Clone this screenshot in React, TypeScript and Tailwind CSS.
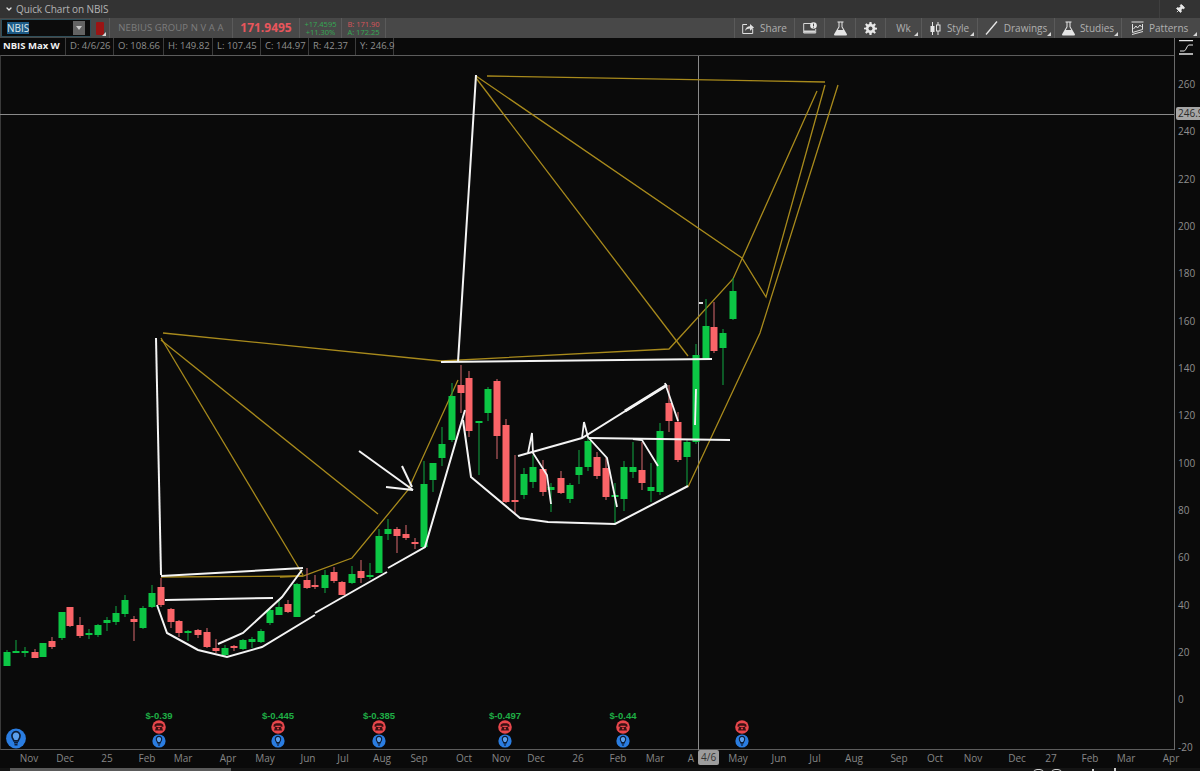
import React from "react";
import { ChevronDown, Pin } from "lucide-react";

type C = [number, number, number, number, number, "g" | "r"];
const candles: C[] = [
  [7, 652, 666, 650, 666, "g"], [16, 651, 652, 640, 653, "g"], [25, 651, 652, 647, 657, "g"], [35, 652, 658, 649, 658, "r"],
  [43, 643, 657, 643, 657, "g"], [52, 641, 647, 637, 649, "r"], [62, 612, 638, 612, 640, "g"], [70, 607, 626, 607, 627, "r"],
  [80, 625, 636, 617, 638, "r"], [89, 633, 635, 629, 639, "g"], [98, 625, 635, 624, 637, "g"], [107, 620, 623, 617, 631, "g"],
  [116, 613, 622, 606, 625, "g"], [125, 600, 614, 595, 617, "g"], [134, 619, 622, 616, 641, "r"], [143, 608, 628, 606, 629, "g"],
  [152, 593, 607, 585, 608, "g"], [161, 587, 605, 578, 607, "r"], [171, 609, 622, 608, 628, "r"], [179, 621, 633, 620, 637, "r"],
  [188, 631, 633, 630, 641, "g"], [198, 630, 635, 629, 638, "r"], [207, 632, 647, 628, 648, "r"], [216, 648, 651, 639, 653, "r"],
  [225, 648, 655, 645, 657, "g"], [234, 646, 648, 645, 651, "r"], [243, 640, 649, 639, 650, "g"], [252, 639, 642, 637, 648, "g"],
  [261, 631, 642, 629, 643, "g"], [270, 610, 623, 609, 625, "g"], [279, 607, 615, 600, 615, "g"], [288, 604, 612, 600, 613, "r"],
  [297, 584, 617, 583, 617, "g"], [307, 580, 588, 568, 589, "r"], [315, 585, 587, 575, 589, "r"], [325, 575, 588, 570, 593, "g"],
  [334, 572, 581, 567, 583, "r"], [342, 582, 595, 581, 595, "r"], [352, 574, 583, 566, 584, "g"], [361, 571, 578, 560, 583, "r"],
  [370, 575, 577, 563, 579, "g"], [379, 536, 573, 529, 573, "g"], [388, 529, 534, 519, 540, "g"], [397, 529, 536, 527, 553, "r"],
  [406, 534, 538, 525, 540, "r"], [415, 542, 544, 538, 549, "r"], [424, 484, 547, 461, 547, "g"], [433, 463, 480, 463, 492, "g"],
  [442, 444, 458, 427, 466, "g"], [452, 396, 440, 383, 442, "g"], [461, 385, 393, 365, 413, "r"], [469, 378, 431, 371, 437, "r"],
  [479, 421, 422, 421, 475, "g"], [488, 389, 413, 387, 421, "g"], [497, 381, 436, 379, 459, "r"], [506, 425, 502, 419, 503, "r"],
  [515, 500, 502, 455, 513, "r"], [524, 474, 495, 468, 499, "g"], [533, 467, 482, 455, 488, "g"], [543, 469, 492, 460, 496, "r"],
  [551, 487, 490, 483, 512, "g"], [561, 478, 493, 471, 494, "r"], [570, 485, 499, 483, 503, "g"], [579, 467, 475, 450, 484, "g"],
  [588, 441, 467, 438, 471, "g"], [597, 457, 476, 452, 479, "r"], [606, 468, 497, 458, 500, "r"], [615, 495, 496, 483, 523, "g"],
  [624, 467, 499, 461, 511, "g"], [633, 467, 472, 442, 478, "g"], [642, 470, 483, 442, 490, "r"], [651, 487, 491, 463, 502, "g"],
  [660, 431, 492, 423, 495, "g"], [669, 403, 421, 385, 432, "r"], [678, 422, 460, 412, 462, "r"], [687, 442, 457, 440, 487, "g"],
  [696, 355, 442, 344, 444, "g"], [706, 326, 359, 299, 360, "g"], [714, 327, 351, 302, 353, "r"], [723, 333, 348, 329, 385, "g"],
  [733, 291, 319, 278, 320, "g"],
];

const white: [string, number][] = [
  ["156,338 161,575", 2], ["161,576 303,568", 2], ["165,600 273,598", 2],
  ["157,605 167,633 198,650 227,657 262,647 315,615", 2], ["315,613 387,572", 2], ["388,568 425,547 465,410", 2],
  ["218,644 243,633 282,597 302,570", 2],
  ["359,451 413,490", 2], ["402,466 412,487", 2], ["386,487 413,490", 2],
  ["458,362 476,75", 2], ["441,362 712,359", 2],
  ["463,420 471,477 520,518 548,522 615,524 688,486", 2],
  ["518,456 582,438 667,385", 2], ["625,411 667,385", 3], ["528,453 532,433 533,453 547,475 551,504", 1.8],
  ["582,438 584,422 588,437 607,458 617,507", 1.8], ["589,438 730,440", 1.8],
  ["633,439 642,440 658,466", 1.8], ["665,383 678,421", 1.8], ["696,389 695,425", 1.8], ["699,303 703,303", 1.8],
];

const gold = [
  "163,333 441,361 669,349 733,279 817,91", "161,338 303,575", "161,340 378,514",
  "161,577 303,576", "280,577 303,576 352,558 408,490 458,380", "476,78 688,356",
  "476,76 742,258 766,297 825,85", "487,76 825,82", "688,487 760,333 838,85",
];

const events: [number, string][] = [
  [159, "$-0.39"], [278, "$-0.445"], [379, "$-0.385"], [505, "$-0.497"], [623, "$-0.44"], [742, ""],
];

const xLabels: [number, string][] = [
  [29, "Nov"], [65, "Dec"], [107, "25"], [147, "Feb"], [183, "Mar"], [228, "Apr"], [265, "May"], [308, "Jun"], [343, "Jul"], [382, "Aug"],
  [419, "Sep"], [464, "Oct"], [501, "Nov"], [536, "Dec"], [578, "26"], [618, "Feb"], [655, "Mar"], [691, "A"], [738, "May"], [779, "Jun"],
  [815, "Jul"], [854, "Aug"], [899, "Sep"], [935, "Oct"], [973, "Nov"], [1017, "Dec"], [1051, "27"], [1090, "Feb"], [1126, "Mar"], [1171, "Apr"],
];

const yLabels = ["260", "240", "220", "200", "180", "160", "140", "120", "100", "80", "60", "40", "20", "0", "-20"];

const Sep = ({ w, className = "", children }: { w: string; className?: string; children?: React.ReactNode }) => (
  <div className={`relative flex h-full shrink-0 items-center justify-center border-r border-[#5a5a5a] ${w} ${className}`}>{children}</div>
);

const Corner = () => (
  <span className="absolute bottom-[2px] right-[3px] h-0 w-0 border-b-[4px] border-l-[4px] border-b-[#d8d8d8] border-l-transparent" />
);

const Flask = () => (
  <svg width="13" height="15" viewBox="0 0 13 15" fill="#e6e6e6">
    <path d="M3.5 0.5h6v1h-1v4.2L12.8 13c.4.8 0 1.6-1 1.6H1.2c-1 0-1.4-.8-1-1.6L4.5 5.7V1.5h-1z" />
    <path d="M5.5 1.5v4.5L3.8 9h5.4L7.5 6V1.5z" fill="#4a4a4a" />
  </svg>
);

const Cell = ({ w, children, bold }: { w: string; children: React.ReactNode; bold?: boolean }) => (
  <div className={`flex h-full shrink-0 items-center border-r border-[#3c3c3c] whitespace-nowrap ${w} ${bold ? "pl-[3px] text-[9.5px] font-bold text-[#f0f0f0]" : "pl-[4px] text-[9.5px] text-[#8f8f8f]"}`}>{children}</div>
);

const Phone = ({ x }: { x: number }) => (
  <g transform={`translate(${x} 727)`}>
    <circle r="6.8" fill="#e8474c" />
    <path d="M-4.5 -1.2c0-2 2-2.6 4.5-2.6s4.5.6 4.5 2.6v1h-2v-1h-5v1h-2z" fill="#3a1012" />
    <path d="M-3 0h6l1 3.4h-8z" fill="#3a1012" />
    <circle cy="1.6" r="1" fill="#e8474c" />
  </g>
);

const Bulb = ({ x, y, s = 1 }: { x: number; y: number; s?: number }) => (
  <g transform={`translate(${x} ${y}) scale(${s})`}>
    <circle r="6.6" fill="#2a7de1" />
    <path d="M-2.6 -1.2a2.7 2.7 0 1 1 5.2 0c0 1.2-1 1.6-1.2 2.8h-2.8c-.2-1.2-1.2-1.6-1.2-2.8z" fill="#5b9fec" stroke="#0d1d36" strokeWidth="1.1" />
    <path d="M-1.3 2.8h2.6M-1 4.1h2" stroke="#0d1d36" strokeWidth="1" />
  </g>
);

export default function App() {
  return (
    <div className="flex h-[771px] w-[1200px] flex-col overflow-hidden bg-[#0a0a0a] font-['Open_Sans',sans-serif] text-[10px]">
      <div className="flex h-[18px] shrink-0 items-center bg-[#333333] pl-[5px] text-[#b4b4b4]">
        <ChevronDown size={8} strokeWidth={4} className="text-[#e0e0e0]" />
        <span className="ml-[3px] text-[10px] tracking-[-0.1px]">Quick Chart on NBIS</span>
        <div className="ml-auto flex h-full w-[41px] items-center justify-center border-l border-[#3f3f3f]">
          <Pin size={10} fill="#e8e8e8" className="rotate-45 text-[#e8e8e8]" />
        </div>
      </div>

      <div className="flex h-[20px] shrink-0 items-center bg-[#484848] text-[#a8a8a8]">
        <div className="ml-[1px] flex h-[18px] w-[90px] shrink-0 items-center justify-between border border-[#2f4f5a] bg-[#0c0c0c] pl-[5px] pr-[5px]">
          <span className="bg-[#1c5a86] text-[10px] leading-[12px] text-[#dfe8ee]">NBIS</span>
          <span className="flex h-[14px] w-[12px] items-center justify-center bg-[#636363]">
            <span className="h-0 w-0 border-x-[3px] border-t-[4px] border-x-transparent border-t-[#c8c8c8]" />
          </span>
        </div>
        <div className="relative ml-[5px] flex h-full w-[14px] shrink-0 items-center border-r border-[#5a5a5a]">
          <span className="h-[13px] w-[8px] rounded-[1px] bg-[#9a1414]" />
          <Corner />
        </div>
        <Sep w="w-[123px]" className="text-[9.5px] tracking-[0.1px] text-[#7d7d7d]">NEBIUS GROUP N V A A</Sep>
        <Sep w="w-[67px]" className="text-[12px] font-bold text-[#e8565c]">171.9495</Sep>
        <div className="flex h-full w-[42px] shrink-0 flex-col items-center justify-center border-r border-[#5a5a5a] text-[7.5px] leading-[8.5px] text-[#34a853]">
          <span>+17.4595</span>
          <span>+11.30%</span>
        </div>
        <div className="flex h-full w-[44px] shrink-0 flex-col items-center justify-center border-r border-[#5a5a5a] text-[7.5px] leading-[8.5px]">
          <span className="text-[#d9545a]">B: 171.90</span>
          <span className="text-[#34a853]">A: 172.25</span>
        </div>
        <div className="ml-auto flex h-full items-center border-l border-[#5a5a5a] text-[#b0b0b0]">
          <Sep w="w-[60px]" className="gap-[5px]">
            <svg width="13" height="12" viewBox="0 0 13 12" fill="none" stroke="#e0e0e0">
              <path d="M5 2.5H.7v9h10V7" />
              <path d="M3 9c.4-3 2.5-4.8 5-4.8V2l4 3.5L8 8.8V6.6C6 6.6 4.4 7.3 3 9z" fill="#e0e0e0" stroke="none" />
            </svg>
            Share
          </Sep>
          <Sep w="w-[30px]">
            <svg width="14" height="12" viewBox="0 0 14 12" fill="none">
              <path d="M.7 1.5h8M.7 1.5v9.500h12V7" stroke="#d8d8d8" />
              <rect x="1" y="8.500" width="11" height="2.200" fill="#d8d8d8" />
              <circle cx="10.500" cy="3.500" r="3.300" fill="#e8e8e8" />
              <path d="M10.500 1.600v2.600M10.500 4.800v.8" stroke="#484848" />
            </svg>
          </Sep>
          <Sep w="w-[31px]"><Flask /></Sep>
          <Sep w="w-[30px]">
            <svg width="13" height="13" viewBox="0 0 13 13">
              <path d="M5.500 0h2l.3 2 1.200.5L10.700 1.300l1.200 1.400L10.600 4.200l.4 1.200 2 .3v1.800l-2 .3-.4 1.200 1.300 1.500-1.200 1.300-1.700-1.200-1.200.5-.3 2h-2l-.3-2-1.200-.5-1.700 1.200L1.100 10.300l1.300-1.500L2 7.600 0 7.300V5.700l2-.3.4-1.200L1.100 2.700 2.300 1.300 4 2.500l1.200-.5z" fill="#e8e8e8" />
              <circle cx="6.500" cy="6.500" r="2" fill="#484848" />
            </svg>
          </Sep>
          <Sep w="w-[36px]">Wk<Corner /></Sep>
          <Sep w="w-[56px]" className="gap-[6px]">
            <svg width="11" height="13" viewBox="0 0 11 13" fill="#e4e4e4">
              <path d="M2.500 0v13M8 0v13" stroke="#e4e4e4" />
              <rect x="0.500" y="4" width="4" height="6" />
              <rect x="6.500" y="3" width="3.500" height="6" fill="#484848" stroke="#e4e4e4" />
            </svg>
            Style<Corner />
          </Sep>
          <Sep w="w-[77px]" className="gap-[6px]">
            <svg width="13" height="14" viewBox="0 0 13 14"><path d="M1 13.500 12 .5" stroke="#e8e8e8" strokeWidth="1.300" /></svg>
            Drawings<Corner />
          </Sep>
          <Sep w="w-[67px]" className="gap-[5px]"><Flask />Studies<Corner /></Sep>
          <div className="relative flex h-full w-[78px] items-center justify-start gap-[5px] pl-[9px]">
            <svg width="13" height="15" viewBox="0 0 13 15" fill="none" stroke="#e0e0e0">
              <path d="M.5 1h12M1.500 3v8.500l10-3V3" />
              <path d="M2.500 8l2.500-3 1.500 2L9 4l1.500 2" />
              <path d="M1 13.500l11-3" />
            </svg>
            Patterns<Corner />
          </div>
        </div>
      </div>

      <div className="flex h-[17px] shrink-0 items-center bg-[#0a0a0a]">
        <Cell w="w-[66px]" bold>NBIS Max W</Cell>
        <Cell w="w-[48px]">D: 4/6/26</Cell>
        <Cell w="w-[50px]">O: 108.66</Cell>
        <Cell w="w-[49px]">H: 149.82</Cell>
        <Cell w="w-[48px]">L: 107.45</Cell>
        <Cell w="w-[48px]">C: 144.97</Cell>
        <Cell w="w-[47px]">R: 42.37</Cell>
        <Cell w="w-[38px]">Y: 246.9</Cell>
        <div className="ml-auto flex h-full w-[26px] shrink-0 items-center border-l border-[#6a6a6a] pl-[4px] pt-[2px]">
          <svg width="15" height="15" viewBox="0 0 15 15" fill="none" stroke="#e4e4e4">
            <path d="M0 .7h14M0 14h14" strokeWidth="1.300" />
            <path d="M1 11h4c2 0 3-6 5-6h4" />
          </svg>
        </div>
      </div>

      <div className="flex h-[695px] shrink-0">
        <div className="relative h-full w-[1174px] shrink-0 border-t border-b border-l border-[#5c5c5c] border-l-[#3a3a3a]">
          <svg className="absolute left-[-1px] top-[-56px]" width="1175" height="751" viewBox="0 0 1175 751" fill="none">
            <path d="M0 114.500H1175M698.500 56V750" stroke="#8a8a8a" strokeWidth="1" />
            {gold.map((p) => (
              <polyline key={p} points={p} stroke="#a88a1c" strokeWidth="1.300" />
            ))}
            {candles.map(([x, t, b, wt, wb, c]) => (
              <g key={x}>
                <line x1={x} x2={x} y1={wt} y2={wb} stroke={c === "g" ? "#0f8f3a" : "#b85a5e"} strokeWidth="1.200" />
                <rect x={x - 3.500} y={t} width={7} height={Math.max(b - t, 2)} fill={c === "g" ? "#0cc745" : "#fb6468"} />
              </g>
            ))}
            {white.map(([p, w]) => (
              <polyline key={p} points={p} stroke="#f4f4f4" strokeWidth={w} />
            ))}
            {events.map(([x, t]) => (
              <g key={x}>
                {t && (
                  <text x={x} y={719} textAnchor="middle" fill="#1fae45" fontSize="9.500" fontWeight="700" fontFamily="'Liberation Sans',sans-serif">
                    {t}
                  </text>
                )}
                <Phone x={x} />
                <Bulb x={x} y={741} />
              </g>
            ))}
            <Bulb x={16} y={738.500} s={1.500} />
          </svg>
        </div>

        <div className="relative h-full min-w-0 flex-1 border-l border-[#6a6a6a] text-[10px] text-[#8f8f8f]">
          <div className="absolute left-[3px] top-[22px] flex h-[677px] flex-col justify-between leading-[14px]">
            {yLabels.map((l) => (
              <span key={l}>{l}</span>
            ))}
          </div>
          <span className="absolute left-[1px] top-[52px] rounded-[2px] bg-[#a6a6a6] px-[2px] text-[10px] leading-[13px] text-[#2a2a2a]">246.9</span>
        </div>
      </div>

      <div className="relative h-[18px] shrink-0 text-[10px] text-[#868686]">
        {xLabels.map(([x, t]) => (
          <span key={x} className="absolute top-[1px] -translate-x-1/2 leading-[15px]" style={{ left: x }}>
            {t}
          </span>
        ))}
        <span className="absolute left-[698px] top-0 h-[15px] rounded-[2px] bg-[#9c9c9c] px-[3px] text-[10px] leading-[15px] text-[#333333]">4/6</span>
      </div>

      <div className="relative h-[3px] shrink-0 bg-[#141414]">
        <div className="ml-[10px] h-full w-[221px] bg-[#5a5a5a]" />
        <span className="absolute left-[1033px] top-[1px] h-[8px] w-[11px] rounded-full border border-[#d0d0d0]" />
        <span className="absolute left-[1051px] top-[1px] h-[8px] w-[11px] rounded-full border border-[#d0d0d0]" />
        <span className="absolute left-[1092px] top-[1px] h-[2px] w-[2px] bg-[#d0d0d0]" />
        <span className="absolute left-[1114px] top-[0px] h-[3px] w-[2px] bg-[#d0d0d0]" />
      </div>
    </div>
  );
}
